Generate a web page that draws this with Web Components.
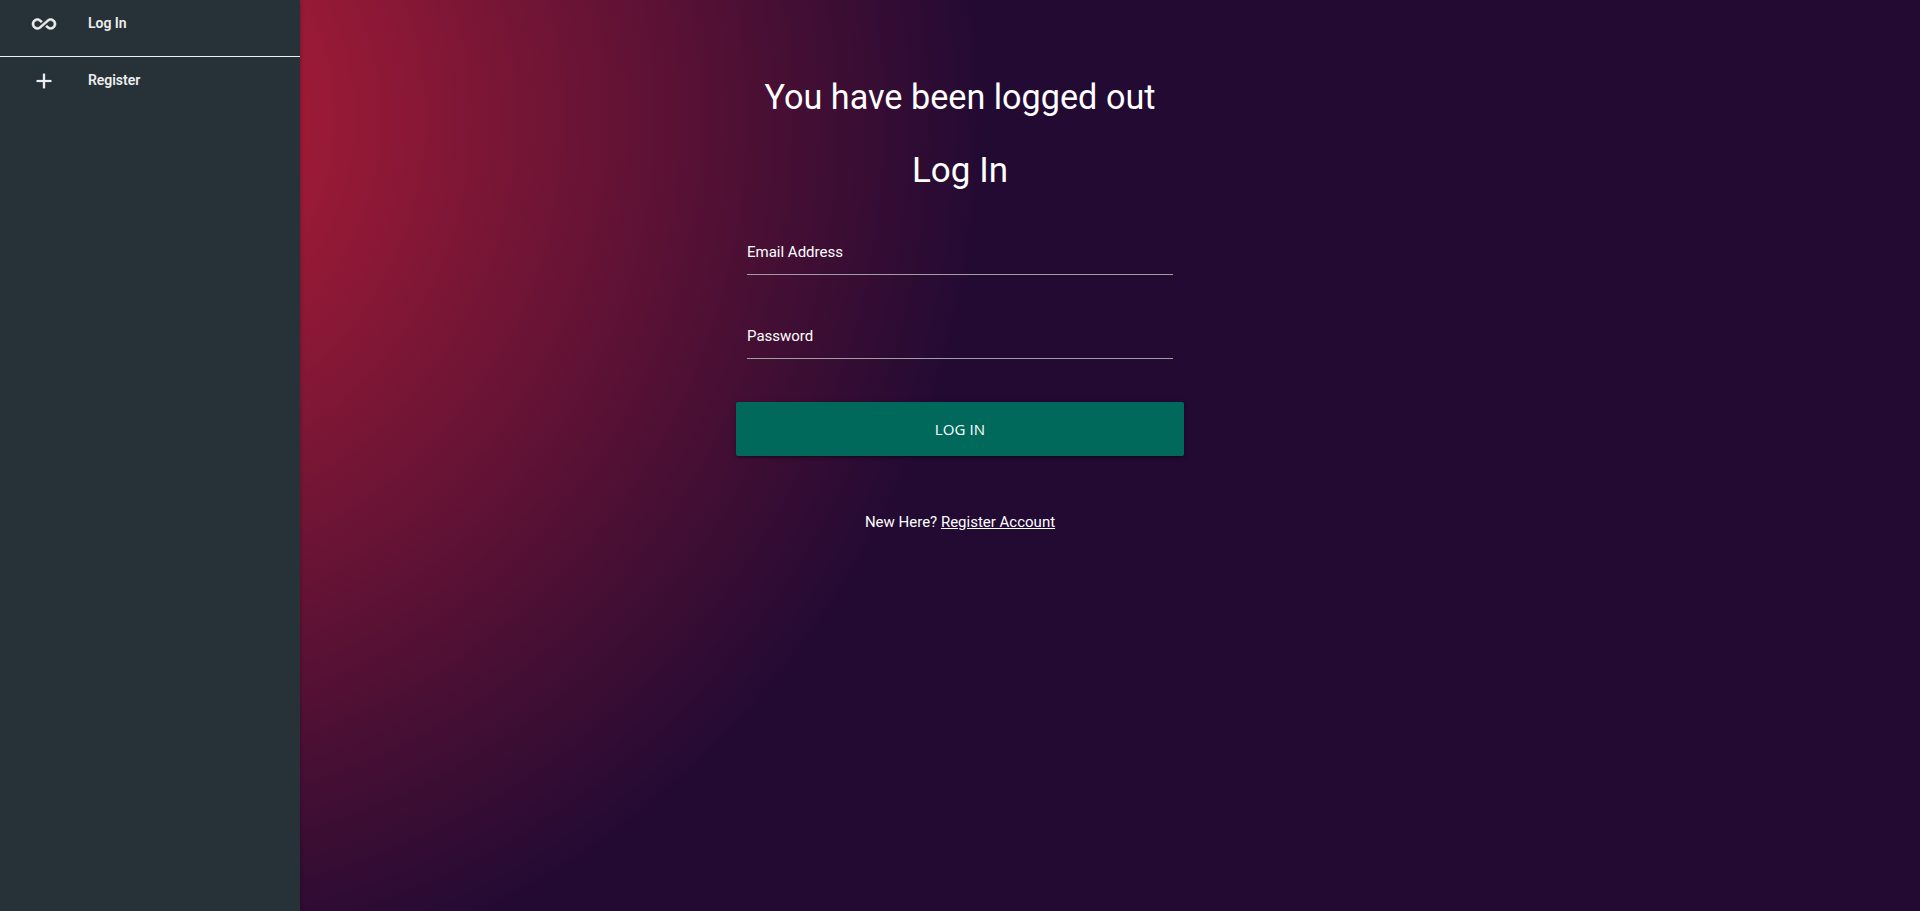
<!DOCTYPE html>
<html lang="en">
<head>
<meta charset="utf-8">
<title>Log In</title>
<style>
html,body{margin:0;height:100%}
body{font-family:Roboto,"Liberation Sans",sans-serif;overflow:hidden}
</style>
</head>
<body>
<app-shell>
  <side-nav slot="nav">
    <nav-item icon="infinity">Log In</nav-item>
    <nav-item icon="plus">Register</nav-item>
  </side-nav>
  <login-form>
    <span slot="message">You have been logged out</span>
    <span slot="title">Log In</span>
    <text-field slot="fields" type="text" label="Email Address"></text-field>
    <text-field slot="fields" type="password" label="Password"></text-field>
    <submit-button slot="action">Log In</submit-button>
  </login-form>
</app-shell>
<script>
const define = (name, html, init) => customElements.define(name, class extends HTMLElement {
  constructor() {
    super();
    this.attachShadow({mode: 'open'}).innerHTML = html;
  }
  connectedCallback() { if (init) init(this, this.shadowRoot); }
});

define('app-shell', `
<style>
:host{display:grid;grid-template-columns:300px 1320px 300px;height:100vh;
 background:radial-gradient(circle 895px at 96px 118px,#c01f37 0%,#220a33 100%)}
main{min-width:0}
</style>
<slot name="nav"></slot><main><slot></slot></main>`);

define('side-nav', `
<style>
:host{display:flex;flex-direction:column;background:#263238;color:#eee;
 box-shadow:0 2px 2px 0 rgba(0,0,0,.14),0 3px 1px -2px rgba(0,0,0,.12),0 1px 5px 0 rgba(0,0,0,.2)}
::slotted(:first-child){border-bottom:1px solid #eee}
</style>
<slot></slot>`);

const ICONS = {
  infinity: 'M18.6 6.62c-1.44 0-2.8.56-3.77 1.53L12 10.66 10.48 12h.01L7.8 14.39c-.64.64-1.49.99-2.4.99-1.87 0-3.39-1.51-3.39-3.38S3.53 8.62 5.4 8.62c.91 0 1.76.35 2.44 1.03l1.13 1 1.51-1.34L9.22 8.2C8.2 7.18 6.84 6.62 5.4 6.62 2.42 6.62 0 9.04 0 12s2.42 5.38 5.4 5.38c1.44 0 2.8-.56 3.77-1.53l2.83-2.5.01.01L13.52 12h-.01l2.69-2.39c.64-.64 1.49-.99 2.4-.99 1.87 0 3.39 1.51 3.39 3.38s-1.52 3.38-3.39 3.38c-.9 0-1.76-.35-2.44-1.03l-1.14-1.01-1.51 1.34 1.27 1.12c1.02 1.01 2.37 1.57 3.82 1.57 2.98 0 5.4-2.41 5.4-5.38s-2.42-5.37-5.4-5.37z',
  plus: 'M19 13h-6v6h-2v-6H5v-2h6V5h2v6h6v2z'
};
define('nav-item', `
<style>
:host{display:block;height:56px}
a{display:flex;align-items:center;height:48px;padding-left:32px;gap:32px;color:inherit;
 font-size:14px;font-weight:600;letter-spacing:-.04px;cursor:pointer}
span{line-height:46px;height:48px}
svg{width:24px;height:24px;overflow:visible;fill:currentColor;stroke:currentColor;stroke-width:.6}
.plus svg{stroke-width:.2;transform:scale(1.05)}
</style>
<a><svg viewBox="0 0 24 24"><path/></svg><span><slot></slot></span></a>`, (el, root) => {
  root.querySelector('path').setAttribute('d', ICONS[el.getAttribute('icon')]);
  root.querySelector('a').className = el.getAttribute('icon');
});

define('login-form', `
<style>
:host{display:flex;flex-direction:column;align-items:center;width:448px;margin:0 auto;padding-top:72px;color:#fff}
h4{margin:0;font-weight:400;font-size:34.2px;line-height:50px}
h4+h4{margin-top:24px;font-size:35px}
.fields{display:flex;flex-direction:column;gap:32px;width:426px;margin-top:27px}
.action{width:448px;margin-top:43px}
p{margin:54px 0 0;font-size:15px;line-height:24px;white-space:nowrap}
a{color:inherit;text-decoration:underline}
</style>
<h4><slot name="message"></slot></h4>
<h4><slot name="title"></slot></h4>
<div class="fields"><slot name="fields"></slot></div>
<div class="action"><slot name="action"></slot></div>
<p>New Here? <a>Register Account</a></p>`);

define('text-field', `
<style>
:host{display:block}
label{display:block;height:51px;border-bottom:1px solid #9e9e9e;font-size:15px;line-height:58px;cursor:text}
</style>
<label></label>`, (el, root) => {
  root.querySelector('label').textContent = el.getAttribute('label');
});

define('submit-button', `
<style>
:host{display:block}
button{display:block;width:100%;height:54px;margin:0;padding:0;border:0;border-radius:2px;background:#00695c;color:#fff;
 font-family:"Open Sans","Noto Sans",sans-serif;font-size:15px;letter-spacing:.1px;text-transform:uppercase;
 box-shadow:0 2px 2px 0 rgba(0,0,0,.14),0 3px 1px -2px rgba(0,0,0,.12),0 1px 5px 0 rgba(0,0,0,.2)}
</style>
<button type="button"><slot></slot></button>`);
</script>
</body>
</html>
